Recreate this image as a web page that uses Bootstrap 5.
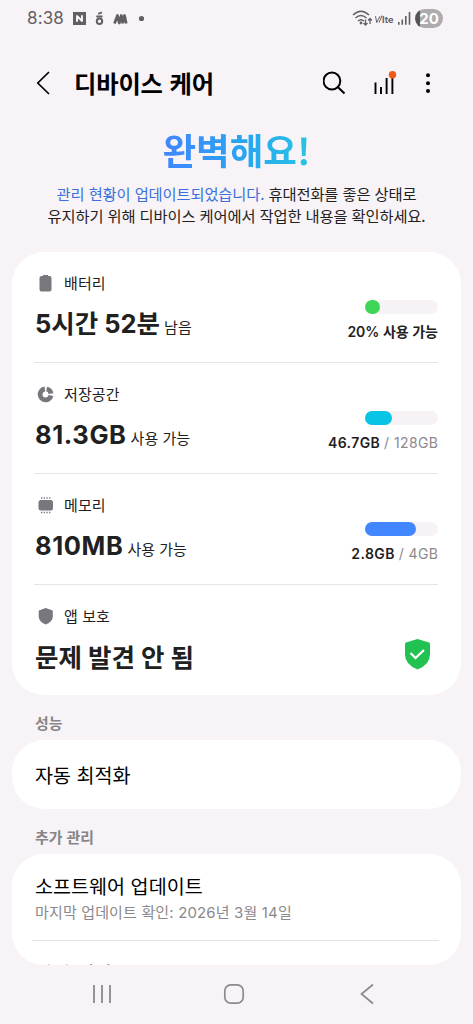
<!DOCTYPE html>
<html lang="ko">
<head>
<meta charset="utf-8">
<meta name="viewport" content="width=device-width, initial-scale=1">
<title>디바이스 케어</title>
<link href="https://cdn.jsdelivr.net/npm/bootstrap@5.3.0/dist/css/bootstrap.min.css" rel="stylesheet">
<style>
  body { background: #f7f3f7; color: #1f2121; font-family: "Inter", "Noto Sans CJK KR", sans-serif; height: 1024px; overflow: hidden; }
  svg { display: block; flex: none; }
  .statusbar { height: 36px; padding: 0 30px 0 27px; color: #626064; }
  .clock { font-size: 17px; letter-spacing: .15px; line-height: 36px; width: 45px; }
  .power { width: 28px; height: 19px; border-radius: 10px; background: linear-gradient(90deg, #555355 5px, #aeabae 5px); color: #fff; font-size: 15px; line-height: 19px; font-weight: 700; }
  .appbar { height: 94px; padding: 0 34px 0 33px; color: #000; }
  .screen-title { font: 700 24.3px/36px "Noto Sans CJK KR", sans-serif; letter-spacing: -.15px; margin-left: 19px; }
  .hero { height: 122px; }
  .hero-title { font: 700 36.6px/44px "Noto Sans CJK KR", sans-serif; margin-top: -2px; background: linear-gradient(90deg, #4285ff, #28a5f0 55%, #27c5e2); -webkit-background-clip: text; background-clip: text; color: transparent; }
  .hero-copy { font: 400 15.3px/22px "Noto Sans CJK KR", sans-serif; letter-spacing: -.12px; margin-top: 10px; }
  .hero-copy span { color: #3b70dc; }
  .panel { background: #fff; border-radius: 32px; margin: 0 12px; overflow: hidden; }
  .metric { height: 111px; margin: 0 23px 0 22px; padding: 21px 0 0 1px; border-bottom: 1px solid #e5e4e6; }
  .metric:last-child { border: 0; height: 110px; }
  .metric:last-child .metric-value { margin-top: 11px; }
  .metric-label { font-size: 15px; line-height: 22px; gap: 8px; letter-spacing: .1px; }
  .metric-value { font-size: 25.5px; font-weight: 700; line-height: 38px; margin-top: 10px; white-space: nowrap; }
  .metric-value small { font-size: 15px; font-weight: 400; margin-left: 4px; letter-spacing: 0; }
  .latin { letter-spacing: .6px; }
  .meter { width: 73px; height: 14px; border-radius: 7px; background: #f6f2f6; margin-top: 26.5px; }
  .meter div { height: 14px; border-radius: 7px; }
  .usage { font-size: 14px; font-weight: 600; line-height: 20px; margin-top: 8.5px; white-space: nowrap; }
  .usage.latin { letter-spacing: .4px; margin-right: -.4px; }
  .usage span { color: #8b898c; font-weight: 400; }
  .section-label { font: 700 14.9px/20px "Noto Sans CJK KR", sans-serif; color: #868588; padding-left: 35px; }
  .item-title { font: 400 19.6px/28px "Noto Sans CJK KR", sans-serif; color: #000; }
  .item-note { font-size: 15px; line-height: 20px; letter-spacing: .15px; color: #8b898c; margin-top: 3px; }
  .navkeys { height: 57px; padding: 0 99px 0 92px; }
  .navkeys svg:nth-child(2) { margin-right: 5px; }
</style>
</head>
<body class="d-flex flex-column">
<header class="statusbar d-flex align-items-center">
  <div class="clock">8:38</div>
  <svg width="80" height="18" viewBox="0 0 80 18" fill="none">
    <rect x="1" y="3" width="13" height="13" fill="#626064"/>
    <path d="M5 12.800V6.200M10 12.800V6.200M5 7l5 5" stroke="#fff" stroke-width="1.800"/>
    <circle cx="27.500" cy="12.300" r="2.700" stroke="#626064" stroke-width="2"/>
    <path d="M24.300 7.500h6.200M26.200 4.800l3.800-1.500" stroke="#626064" stroke-width="1.900"/>
    <path d="M42.500 14.500l3-8 1.800 7.500 2-7.500 1.500 8M50.500 14l2-7.500 1.700 8" stroke="#626064" stroke-width="2.800" stroke-linejoin="round"/>
    <circle cx="69.500" cy="9.500" r="2.600" fill="#626064"/>
  </svg>
  <svg class="ms-auto me-1" width="59" height="20" viewBox="0 0 59 20" fill="none" stroke="#626064">
    <g stroke-width="1.500"><path d="M1 7q8-7.500 16 0M3.500 10q5.500-5 11 0M6 13q3-2.600 6 0"/></g>
    <circle cx="9" cy="15" r="1.400" fill="#626064" stroke="none"/>
    <path d="M13.500 11.500V17m-2-2 2 2 2-2M18 16v-5.500m-2 2 2-2 2 2" stroke-width="1.300"/>
    <path d="M23.500 8.200l1.200 6.300q2-3.500 3.200-6.300M27 14.500l3.200-7" stroke-width="1"/>
    <text x="30" y="14.700" fill="#626064" stroke="none" font-size="8.500" font-weight="700" font-family="Inter" textLength="11.500" lengthAdjust="spacingAndGlyphs">lte</text>
    <path d="M46.800 16.700v-2.700M50.300 16.700v-5.200M53.800 16.700V8M57.500 16.700V4" stroke-width="1.600"/>
  </svg>
  <div class="power text-center">20</div>
</header>
<nav class="appbar d-flex align-items-center">
  <svg width="22" height="26" viewBox="0 0 22 26" fill="none" stroke="#000" stroke-width="1.700"><path d="M16 2 4.800 13 16 24"/></svg>
  <h1 class="screen-title mb-0">디바이스 케어</h1>
  <svg class="ms-auto" width="116" height="30" viewBox="0 0 116 30" fill="none" stroke="#000">
    <circle cx="8.900" cy="13" r="8.400" stroke-width="2"/><path d="M15 19.200 21.500 25.500" stroke-width="2"/>
    <path d="M52.500 14.500v11.500M58 19v7M63.600 10v16M69.400 8v18" stroke-width="1.900"/>
    <circle cx="69.500" cy="6.800" r="3.700" fill="#ee5b16" stroke="none"/>
    <g fill="#000" stroke="none"><circle cx="105" cy="7.300" r="2"/><circle cx="105" cy="15.200" r="2"/><circle cx="105" cy="23" r="2"/></g>
  </svg>
</nav>
<section class="hero d-flex flex-column align-items-center text-center">
  <div class="hero-title">완벽해요!</div>
  <p class="hero-copy mb-0"><span>관리 현황이 업데이트되었습니다.</span> 휴대전화를 좋은 상태로<br>유지하기 위해 디바이스 케어에서 작업한 내용을 확인하세요.</p>
</section>
<main>
  <section class="panel">
    <div class="metric d-flex justify-content-between">
      <div>
        <div class="metric-label d-flex align-items-center">
          <svg width="21" height="20" viewBox="0 0 21 20" fill="#77777d"><path d="M8 2V1h5v1h1.500q2 0 2 2v11.500q0 2-2 2h-8q-2 0-2-2V4q0-2 2-2z"/></svg>배터리</div>
        <div class="metric-value">5시간 52분<small>남음</small></div>
      </div>
      <div class="d-flex flex-column align-items-end"><div class="meter"><div style="width:20%;background:#3dd656"></div></div><div class="usage">20% 사용 가능</div></div>
    </div>
    <div class="metric d-flex justify-content-between">
      <div>
        <div class="metric-label d-flex align-items-center">
          <svg width="21" height="20" viewBox="0 0 21 20" fill="none" stroke="#77777d" stroke-width="4.800"><path d="M9.900 4A5.500 5.500 0 1 0 16 10.600M11.600 4A5.500 5.500 0 0 1 16 8.600"/></svg>저장공간</div>
        <div class="metric-value latin">81.3GB<small>사용 가능</small></div>
      </div>
      <div class="d-flex flex-column align-items-end"><div class="meter"><div style="width:37%;background:#08c5e5"></div></div><div class="usage latin">46.7GB <span>/ 128GB</span></div></div>
    </div>
    <div class="metric d-flex justify-content-between">
      <div>
        <div class="metric-label d-flex align-items-center">
          <svg width="21" height="20" viewBox="0 0 21 20" fill="#77777d"><rect x="3.500" y="4" width="14.500" height="10.500" rx="2.500"/><path d="M6 2h9.500M6 16.500h9.500" stroke="#77777d" stroke-width="1.600" stroke-dasharray="1.300 1.400"/></svg>메모리</div>
        <div class="metric-value latin">810MB<small>사용 가능</small></div>
      </div>
      <div class="d-flex flex-column align-items-end"><div class="meter"><div style="width:70%;background:#4287ff"></div></div><div class="usage latin">2.8GB <span>/ 4GB</span></div></div>
    </div>
    <div class="metric d-flex justify-content-between">
      <div>
        <div class="metric-label d-flex align-items-center">
          <svg width="21" height="20" viewBox="0 0 21 20" fill="#77777d"><path d="M10.700 1 17 3.200q.8.300.8 1.200V9.500q0 5-7.100 8Q3.700 14.500 3.700 9.500V4.400q0-.9.800-1.200z"/></svg>앱 보호</div>
        <div class="metric-value">문제 발견 안 됨</div>
      </div>
      <svg width="28" height="34" viewBox="0 0 28 34" style="margin:32px 6px 0 0"><path d="M13.500 1 25 4.500q1 .4 1 1.500V16.500q0 10-12.500 15Q1 26.500 1 16.500V6Q1 4.900 2 4.500z" fill="#22c252"/><path d="m6.500 15 5 5 8.500-8" fill="none" stroke="#fff" stroke-width="2.200"/></svg>
    </div>
  </section>
  <h2 class="section-label mb-0" style="margin-top:18px">성능</h2>
  <section class="panel d-flex align-items-center" style="height:69px;margin-top:7px;padding-left:23px"><div class="item-title">자동 최적화</div></section>
  <h2 class="section-label mb-0" style="margin-top:18px">추가 관리</h2>
  <section class="panel" style="height:111px;margin-top:7px">
    <div class="border-bottom" style="height:87px;padding:18px 0 0 3px;margin:0 22px 0 20px">
      <div class="item-title">소프트웨어 업데이트</div>
      <div class="item-note">마지막 업데이트 확인: 2026년 3월 14일</div>
    </div>
    <div class="item-title" style="padding:18px 0 0 23px">자가 진단</div>
  </section>
</main>
<footer class="navkeys d-flex align-items-center justify-content-between">
  <svg width="20" height="22" viewBox="0 0 20 22" stroke="#8b8a8c" stroke-width="1.800"><path d="M2 2v18M10 2v18M18 2v18"/></svg>
  <svg width="22" height="22" viewBox="0 0 22 22" fill="none" stroke="#8b8a8c" stroke-width="1.700"><rect x="1.800" y="1.800" width="18.400" height="18.400" rx="6"/></svg>
  <svg width="14" height="22" viewBox="0 0 14 22" fill="none" stroke="#8b8a8c" stroke-width="1.700"><path d="M13 1.500 1.500 11 13 20.500"/></svg>
</footer>
<script src="https://cdn.jsdelivr.net/npm/bootstrap@5.3.0/dist/js/bootstrap.bundle.min.js"></script>
</body>
</html>
